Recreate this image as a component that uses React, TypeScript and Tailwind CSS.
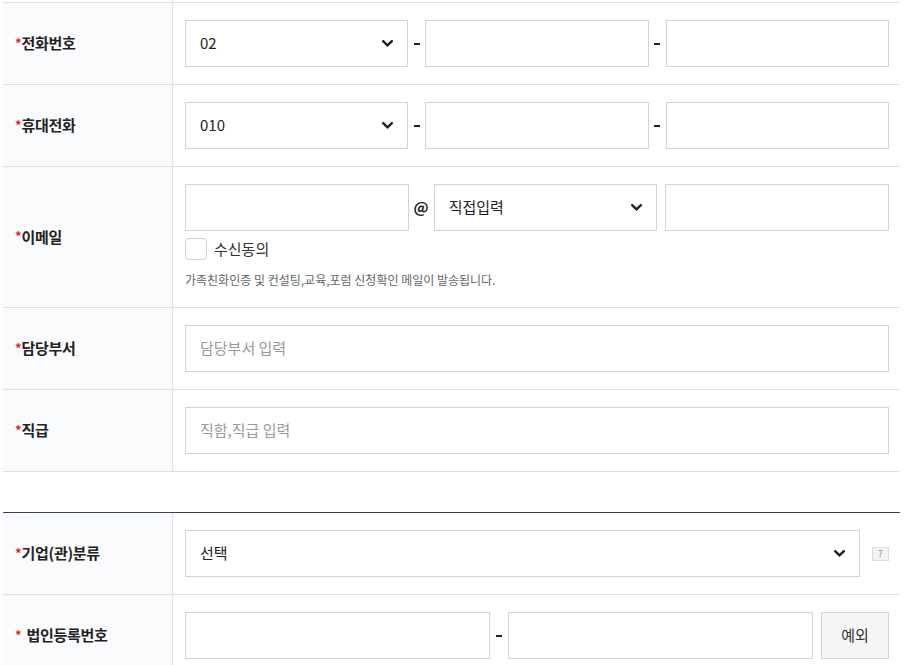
import React from "react";

const FONT = "font-['Noto_Sans_CJK_KR','Noto_Sans',sans-serif]";

function Chevron() {
  return (
    <svg width="11" height="7" viewBox="0 0 11 7" className="shrink-0">
      <path d="M1.2 1.2 L5.5 5.3 L9.8 1.2" fill="none" stroke="#1f1f1f" strokeWidth="2.4" strokeLinecap="square" />
    </svg>
  );
}

function Label({ text, spaced = false }: { text: string; spaced?: boolean }) {
  return (
    <div className="w-[170px] shrink-0 bg-[#fafbfd] border-r border-[#e1e1e1] pl-3 flex items-center">
      <span className="text-[#ec1c24] text-[13px] font-bold leading-none -mt-[3px]">*</span>
      {spaced && <span className="w-[5px]" />}
      <span className="text-[15px] font-bold text-[#222] tracking-[-0.3px]">{text}</span>
    </div>
  );
}

function Box({ children, className = "" }: { children?: React.ReactNode; className?: string }) {
  return (
    <div className={`h-[47px] border border-[#d4d4d4] bg-white flex items-center px-[14px] text-[15px] text-[#222] ${className}`}>
      {children}
    </div>
  );
}

function Select({ value, className = "" }: { value: string; className?: string }) {
  return (
    <Box className={`justify-between ${className}`}>
      <span>{value}</span>
      <Chevron />
    </Box>
  );
}

function Dash({ w = "w-[17px]" }: { w?: string }) {
  return (
    <div className={`${w} shrink-0 flex justify-center`}>
      <span className="block w-[6px] h-[2px] bg-[#222]" />
    </div>
  );
}

function Row({ label, spaced, children }: { label: string; spaced?: boolean; children: React.ReactNode }) {
  return (
    <div className="flex border-b border-[#dedede]">
      <Label text={label} spaced={spaced} />
      <div className="flex-1 pl-[12px] pr-[11px] py-[17px]">{children}</div>
    </div>
  );
}

export default function App() {
  return (
    <div className={`min-h-screen bg-white pl-[3px] ${FONT}`}>
      <div className="w-[897px]">
        <div className="h-[2px] flex">
          <div className="w-[170px] border-r border-[#e1e1e1]" />
        </div>

        <div className="border-t border-[#dedede]">
          <Row label="전화번호">
            <div className="flex items-center">
              <Select value="02" className="flex-1" />
              <Dash />
              <Box className="flex-1" />
              <Dash />
              <Box className="flex-1" />
            </div>
          </Row>

          <Row label="휴대전화">
            <div className="flex items-center">
              <Select value="010" className="flex-1" />
              <Dash />
              <Box className="flex-1" />
              <Dash />
              <Box className="flex-1" />
            </div>
          </Row>

          <Row label="이메일">
            <div className="flex items-center">
              <Box className="flex-1" />
              <div className="w-[25px] shrink-0 flex justify-center text-[15px] font-bold text-[#222]">@</div>
              <Select value="직접입력" className="flex-1" />
              <div className="w-[8px] shrink-0" />
              <Box className="flex-1" />
            </div>
            <label className="mt-[7px] h-[22px] flex items-center gap-[7px]">
              <span className="w-[22px] h-[22px] border border-[#cfcfcf] rounded-[4px] bg-white" />
              <span className="text-[15px] leading-[22px] text-[#333]">수신동의</span>
            </label>
            <p className="mt-[10px] text-[12px] leading-[20px] text-[#666]">
              가족친화인증 및 컨설팅,교육,포럼 신청확인 메일이 발송됩니다.
            </p>
          </Row>

          <Row label="담당부서">
            <Box className="text-[#999]">담당부서 입력</Box>
          </Row>

          <Row label="직급">
            <Box className="text-[#999]">직함,직급 입력</Box>
          </Row>
        </div>

        <div className="h-[40px]" />

        <div className="border-t border-[#3b4052]">
          <Row label="기업(관)분류">
            <div className="flex items-center">
              <Select value="선택" className="flex-1" />
              <div className="ml-[12px] w-[17px] h-[14px] shrink-0 border border-[#dcdcdc] bg-[#f3f3f3] flex items-center justify-center text-[9px] leading-none text-[#888]">
                ?
              </div>
            </div>
          </Row>

          <Row label="법인등록번호" spaced>
            <div className="flex items-center">
              <Box className="flex-1" />
              <Dash w="w-[18px]" />
              <Box className="flex-1" />
              <div className="w-[8px] shrink-0" />
              <button className="w-[68px] h-[47px] shrink-0 border border-[#d4d4d4] bg-[#f5f5f5] text-[15px] text-[#333]">
                예외
              </button>
            </div>
          </Row>
        </div>
      </div>
    </div>
  );
}
